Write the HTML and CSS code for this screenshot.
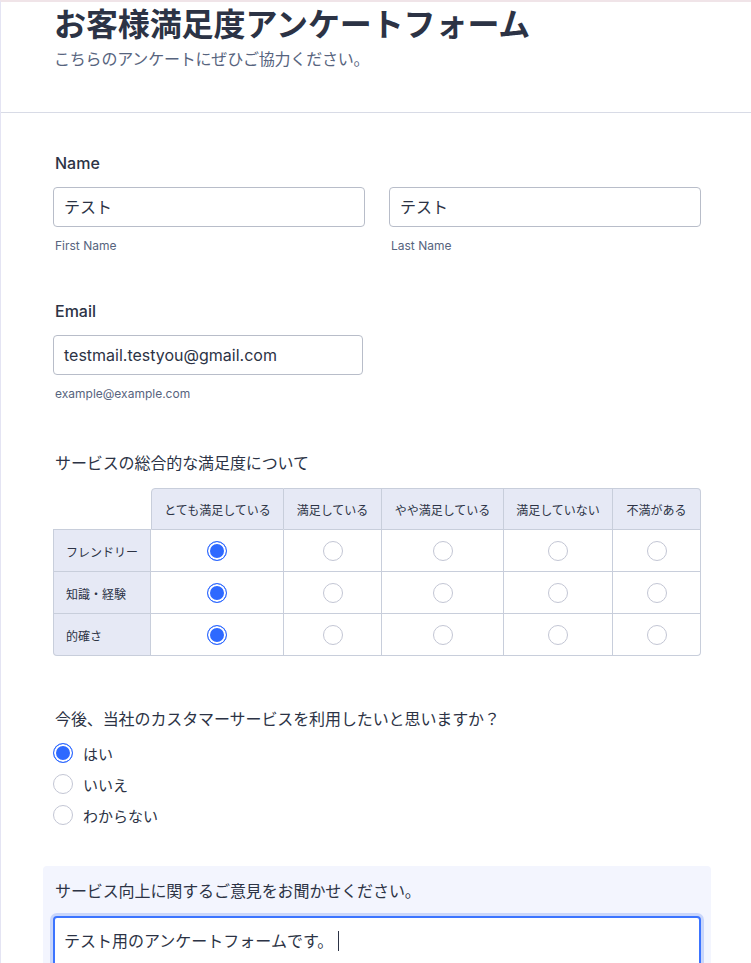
FILE: index.html
```html
<!DOCTYPE html>
<html lang="ja">
<head>
<meta charset="utf-8">
<title>お客様満足度アンケートフォーム</title>
<link rel="stylesheet" href="styles.css">
</head>
<body>
<div class="page">
  <header class="header">
    <h1 class="title">お客様満足度アンケートフォーム</h1>
    <p class="subtitle">こちらのアンケートにぜひご協力ください。</p>
  </header>

  <main class="form">
    <section class="field field-name">
      <div class="label">Name</div>
      <div class="name-grid">
        <div class="name-col">
          <div class="input">テスト</div>
          <div class="sublabel">First Name</div>
        </div>
        <div class="name-col">
          <div class="input">テスト</div>
          <div class="sublabel">Last Name</div>
        </div>
      </div>
    </section>

    <section class="field field-email">
      <div class="label">Email</div>
      <div class="input input-email">testmail.testyou@gmail.com</div>
      <div class="sublabel">example@example.com</div>
    </section>

    <section class="field field-matrix">
      <div class="label label-jp">サービスの総合的な満足度について</div>
      <div class="matrix">
        <div class="cell corner"></div>
        <div class="cell head head-first">とても満足している</div>
        <div class="cell head">満足している</div>
        <div class="cell head">やや満足している</div>
        <div class="cell head">満足していない</div>
        <div class="cell head head-last">不満がある</div>

        <div class="cell rowlabel">フレンドリー</div>
        <div class="cell"><span class="radio checked"></span></div>
        <div class="cell"><span class="radio"></span></div>
        <div class="cell"><span class="radio"></span></div>
        <div class="cell"><span class="radio"></span></div>
        <div class="cell"><span class="radio"></span></div>

        <div class="cell rowlabel">知識・経験</div>
        <div class="cell"><span class="radio checked"></span></div>
        <div class="cell"><span class="radio"></span></div>
        <div class="cell"><span class="radio"></span></div>
        <div class="cell"><span class="radio"></span></div>
        <div class="cell"><span class="radio"></span></div>

        <div class="cell rowlabel rowlabel-last">的確さ</div>
        <div class="cell"><span class="radio checked"></span></div>
        <div class="cell"><span class="radio"></span></div>
        <div class="cell"><span class="radio"></span></div>
        <div class="cell"><span class="radio"></span></div>
        <div class="cell cell-last"><span class="radio"></span></div>
      </div>
    </section>

    <section class="field field-choice">
      <div class="label label-jp">今後、当社のカスタマーサービスを利用したいと思いますか？</div>
      <div class="options">
        <div class="option"><span class="radio checked"></span><span class="option-text">はい</span></div>
        <div class="option"><span class="radio"></span><span class="option-text">いいえ</span></div>
        <div class="option"><span class="radio"></span><span class="option-text">わからない</span></div>
      </div>
    </section>

    <section class="field-comment">
      <div class="label label-jp">サービス向上に関するご意見をお聞かせください。</div>
      <div class="textarea">テスト用のアンケートフォームです。<span class="caret"></span></div>
    </section>
  </main>
</div>
</body>
</html>
```

FILE: styles.css
```css
* { box-sizing: border-box; }

html, body {
  margin: 0;
  padding: 0;
  background: #ffffff;
  height: 963px;
  overflow: hidden;
}

body {
  font-family: Inter, "Noto Sans CJK JP", sans-serif;
  color: #2c3345;
}

.page {
  border-top: 2px solid #f0e4e8;
  border-left: 1px solid #e4e4f3;
  min-height: 961px;
}

.header {
  padding: 0 0 42px 53px;
  border-bottom: 1px solid #d8dbe6;
}

.title {
  margin: 0;
  font-family: "Noto Sans CJK JP", sans-serif;
  font-size: 32px;
  line-height: 40px;
  font-weight: 700;
  color: #2c3345;
  letter-spacing: -0.1px;
}

.subtitle {
  margin: 4px 0 0 0;
  font-family: "Noto Sans CJK JP", sans-serif;
  font-size: 16px;
  line-height: 24px;
  color: #57647e;
  letter-spacing: -0.2px;
}

.form {
  padding: 40px 50px 0 52px;
}

.label {
  font-size: 16px;
  line-height: 20px;
  font-weight: 500;
  color: #2c3345;
  padding-left: 2px;
}

.label-jp {
  font-family: "Noto Sans CJK JP", sans-serif;
  font-size: 16px;
  font-weight: 400;
  letter-spacing: -0.1px;
}

.name-grid {
  display: grid;
  grid-template-columns: 312px 312px;
  column-gap: 24px;
  margin-top: 14px;
}

.input {
  height: 40px;
  border: 1px solid #b8bdc9;
  border-radius: 4px;
  padding: 0 10px;
  font-size: 16px;
  line-height: 38px;
  color: #2c3345;
  background: #fff;
  font-family: Inter, "Noto Sans CJK JP", sans-serif;
}

.input-email {
  width: 310px;
  margin-top: 14px;
}

.sublabel {
  margin-top: 11px;
  font-size: 12px;
  line-height: 16px;
  color: #57647e;
  padding-left: 2px;
}

.field-email {
  margin-top: 47px;
}

.field-matrix {
  margin-top: 50px;
}

.matrix {
  margin-top: 16px;
  display: grid;
  grid-template-columns: 98px 133px 98px 122px 109px 88px;
  grid-auto-rows: 42px;
  width: 648px;
}

.cell {
  display: flex;
  align-items: center;
  justify-content: center;
  border-right: 1px solid #c8cedb;
  border-bottom: 1px solid #c8cedb;
  background: #fff;
}

.corner {
  border-right: none;
}

.head {
  background: #e6e9f5;
  border-top: 1px solid #c8cedb;
  font-family: "Noto Sans CJK JP", sans-serif;
  font-size: 12px;
  color: #2c3345;
}

.head-first {
  border-left: 1px solid #c8cedb;
  border-top-left-radius: 4px;
}

.head-last {
  border-top-right-radius: 4px;
}

.rowlabel {
  justify-content: flex-start;
  padding-left: 12px;
  background: #e6e9f5;
  border-left: 1px solid #c8cedb;
  font-family: "Noto Sans CJK JP", sans-serif;
  font-size: 12px;
  color: #2c3345;
  padding-top: 1px;
}

.rowlabel-last {
  border-bottom-left-radius: 4px;
}

.cell-last {
  border-bottom-right-radius: 4px;
}

.radio {
  display: inline-block;
  width: 20px;
  height: 20px;
  border-radius: 50%;
  border: 1px solid #c3c6d4;
  background: #fff;
  flex: none;
}

.radio.checked {
  border: 1.5px solid #2e69ff;
  background: #2e69ff;
  box-shadow: inset 0 0 0 2px #ffffff;
}

.field-choice {
  margin-top: 52px;
}

.options {
  margin-top: 15px;
  display: flex;
  flex-direction: column;
  gap: 11px;
}

.option {
  display: flex;
  align-items: center;
  height: 20px;
}

.option-text {
  margin-left: 10px;
  font-family: "Noto Sans CJK JP", sans-serif;
  font-size: 15px;
  color: #2c3345;
}

.field-comment {
  margin: 41px 0 0 -10px;
  width: 668px;
  background: #f3f5fe;
  border-radius: 4px 4px 0 0;
  padding: 14px 10px 0 10px;
  height: 120px;
}

.field-comment .label {
  padding-left: 2px;
}

.textarea {
  margin-top: 16px;
  height: 120px;
  border: 2px solid #3c74ff;
  border-radius: 4px;
  box-shadow: 0 0 0 3px #c9d6fb;
  background: #fff;
  padding: 10px 9px;
  font-family: "Noto Sans CJK JP", sans-serif;
  font-size: 16px;
  line-height: 24px;
  color: #2c3345;
  letter-spacing: 0;
}

.caret {
  display: inline-block;
  width: 1px;
  height: 20px;
  background: #2c3345;
  margin-left: 5px;
  vertical-align: -4px;
}
```
